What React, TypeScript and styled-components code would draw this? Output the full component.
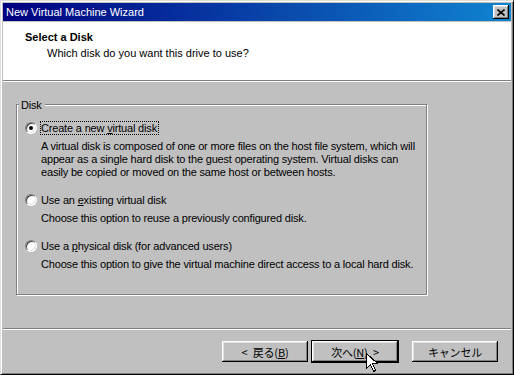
import React from "react";
import styled, { createGlobalStyle } from "styled-components";

const GlobalStyle = createGlobalStyle`
  html, body {
    margin: 0;
    padding: 0;
    background: #c0c0c0;
  }
  body {
    font-family: "Liberation Sans", Arial, sans-serif;
    font-size: 11px;
    color: #000;
  }
`;

const options = [
  {
    id: "new",
    label: (
      <>
        Create a new <u>v</u>irtual disk
      </>
    ),
    desc: "A virtual disk is composed of one or more files on the host file system, which will appear as a single hard disk to the guest operating system. Virtual disks can easily be copied or moved on the same host or between hosts.",
  },
  {
    id: "existing",
    label: (
      <>
        Use an <u>e</u>xisting virtual disk
      </>
    ),
    desc: "Choose this option to reuse a previously configured disk.",
  },
  {
    id: "physical",
    label: (
      <>
        Use a <u>p</u>hysical disk (for advanced users)
      </>
    ),
    desc: "Choose this option to give the virtual machine direct access to a local hard disk.",
  },
];

const App = () => {
  const selected = "new";
  return (
    <>
      <GlobalStyle />
      <Window>
        <TitleBar>
          <TitleText>New Virtual Machine Wizard</TitleText>
          <CloseButton>
            <svg width="8" height="7" viewBox="0 0 8 7">
              <path d="M0.5 0.5 L7.5 6.5 M7.5 0.5 L0.5 6.5" stroke="#000" strokeWidth="1.6" />
            </svg>
          </CloseButton>
        </TitleBar>

        <Header>
          <HeaderTitle>Select a Disk</HeaderTitle>
          <HeaderSub>Which disk do you want this drive to use?</HeaderSub>
        </Header>
        <Separator />

        <Body>
          <GroupBox>
            <Caption>Disk</Caption>
            {options.map((opt, i) => (
              <Option key={opt.id} $first={i === 0}>
                <OptionRow>
                  <Radio $checked={opt.id === selected} />
                  <OptionLabel $focused={opt.id === selected}>{opt.label}</OptionLabel>
                </OptionRow>
                <OptionDesc>{opt.desc}</OptionDesc>
              </Option>
            ))}
          </GroupBox>
        </Body>

        <Separator />
        <ButtonRow>
          <Button>
            &lt;{"\u2002"}戻る(<u>B</u>)
          </Button>
          <Button $default $gap={4}>
            次へ(<u>N</u>){"\u2002"}&gt;
          </Button>
          <Button $gap={14}>キャンセル</Button>
        </ButtonRow>

        <Cursor width="13" height="20" viewBox="0 0 13 20">
          <path
            d="M0.5 0.5 L0.5 15.5 L4.5 11.5 L7.5 18.5 L9.5 17.5 L6.5 10.5 L11.5 10.5 Z"
            fill="#fff"
            stroke="#000"
            strokeWidth="1"
            shapeRendering="crispEdges"
          />
        </Cursor>
      </Window>
    </>
  );
};

export default App;

const Window = styled.div`
  position: relative;
  box-sizing: border-box;
  width: 514px;
  height: 375px;
  display: flex;
  flex-direction: column;
  background: #c0c0c0;
  border: 1px solid;
  border-color: #dfdfdf #000 #000 #dfdfdf;
  box-shadow: inset 1px 1px #fff, inset -1px -1px #808080;
  padding: 2px;
  overflow: hidden;
`;

const TitleBar = styled.div`
  flex: none;
  height: 18px;
  margin-bottom: 1px;
  display: flex;
  align-items: center;
  padding: 0 2px 0 3px;
  background: linear-gradient(to right, #000080, #1084d0);
  color: #fff;
`;

const TitleText = styled.span`
  flex: 1;
  line-height: 18px;
`;

const CloseButton = styled.div`
  box-sizing: border-box;
  width: 16px;
  height: 14px;
  display: flex;
  align-items: center;
  justify-content: center;
  background: #c0c0c0;
  box-shadow: inset -1px -1px #000, inset 1px 1px #fff, inset -2px -2px #808080,
    inset 2px 2px #dfdfdf;
`;

const Header = styled.div`
  flex: none;
  box-sizing: border-box;
  height: 58px;
  padding: 9px 0 0 22px;
  background: #fff;
`;

const HeaderTitle = styled.div`
  font-weight: bold;
  line-height: 13px;
`;

const HeaderSub = styled.div`
  margin-top: 3px;
  padding-left: 22px;
  line-height: 13px;
`;

const Separator = styled.div`
  flex: none;
  height: 0;
  border-top: 1px solid #808080;
  border-bottom: 1px solid #fff;
`;

const Body = styled.div`
  flex: 1;
  padding: 22px 0 0 13px;
`;

const GroupBox = styled.div`
  position: relative;
  box-sizing: border-box;
  width: 411px;
  height: 191px;
  padding: 16px 0 0 8px;
  border: 1px solid #808080;
  box-shadow: inset 1px 1px #fff, 1px 1px #fff;
  letter-spacing: -0.18px;
`;

const Caption = styled.span`
  position: absolute;
  top: -6px;
  left: 2px;
  padding: 0 3px 0 2px;
  line-height: 13px;
  background: #c0c0c0;
`;

const Option = styled.div<{ $first?: boolean }>`
  margin-top: ${({ $first }) => ($first ? 0 : 14)}px;
`;

const OptionRow = styled.div`
  display: flex;
  align-items: center;
  height: 14px;
`;

const Radio = styled.span<{ $checked?: boolean }>`
  position: relative;
  flex: none;
  box-sizing: border-box;
  width: 12px;
  height: 12px;
  margin-right: 3px;
  border-radius: 50%;
  background: #fff;
  border: 1px solid;
  border-color: #808080 #fff #fff #808080;
  box-shadow: inset 1px 1px #404040, inset -1px -1px #dfdfdf;

  &::after {
    content: "";
    display: ${({ $checked }) => ($checked ? "block" : "none")};
    position: absolute;
    left: 3px;
    top: 3px;
    width: 4px;
    height: 4px;
    border-radius: 50%;
    background: #000;
  }
`;

const OptionLabel = styled.span<{ $focused?: boolean }>`
  line-height: 12px;
  padding: 0 1px 0 0;
  border: 1px dotted ${({ $focused }) => ($focused ? "#000" : "transparent")};
  white-space: nowrap;
`;

const OptionDesc = styled.div`
  width: 377px;
  margin: 5px 0 0 16px;
  line-height: 13px;
`;

const ButtonRow = styled.div`
  flex: none;
  box-sizing: border-box;
  height: 42px;
  display: flex;
  justify-content: flex-end;
  align-items: flex-start;
  padding: 11px 13px 0 0;
`;

const Button = styled.div<{ $default?: boolean; $gap?: number }>`
  box-sizing: border-box;
  width: 86px;
  height: 21px;
  margin-left: ${({ $gap }) => $gap ?? 0}px;
  display: flex;
  align-items: center;
  justify-content: center;
  font-family: "Noto Sans CJK JP", "Liberation Sans", sans-serif;
  font-size: 11px;
  letter-spacing: -0.2px;
  white-space: pre;
  background: #c0c0c0;
  box-shadow: inset -1px -1px #000, inset 1px 1px #fff, inset -2px -2px #808080,
    inset 2px 2px #dfdfdf;
  outline: ${({ $default }) => ($default ? "1px solid #000" : "none")};

  u {
    text-underline-offset: 1px;
  }
`;

const Cursor = styled.svg`
  position: absolute;
  left: 365px;
  top: 352px;
`;
